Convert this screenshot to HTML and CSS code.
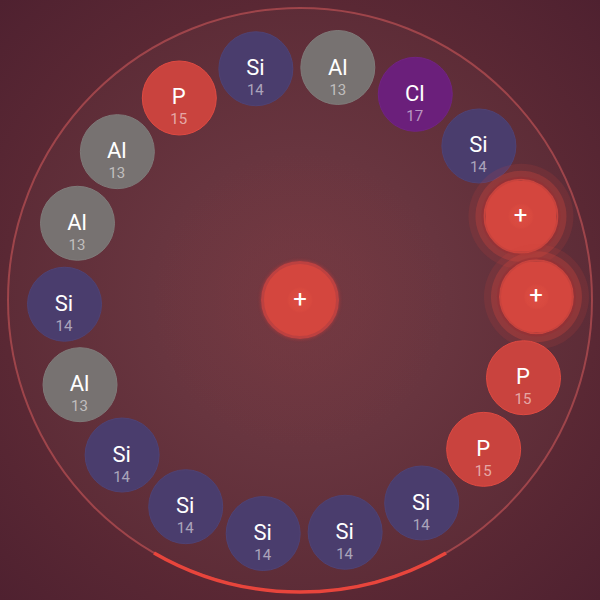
FILE: index.html
```html
<!DOCTYPE html>
<html>
<head>
<meta charset="utf-8">
<link rel="stylesheet" href="styles.css">
</head>
<body>
<div class="board">
  <div class="field">
    <svg class="ring" viewBox="0 0 588 588" width="588" height="588">
      <circle cx="294" cy="294" r="292" fill="rgba(255,255,255,0.02)" stroke="rgba(225,95,95,0.5)" stroke-width="2"/>
      <path d="M 440 546.9 A 292 292 0 0 1 148 546.9" fill="none" stroke="#e8453c" stroke-width="3.5"/>
    </svg>
    <div class="glow"></div>
    <div class="atom center-atom plus"><span class="sym">+</span></div>
    <div class="orbit">
      <div class="atom si" style="--a:349.1deg"><span class="sym">Si</span><span class="num">14</span></div>
      <div class="atom al" style="--a:9.1deg"><span class="sym">Al</span><span class="num">13</span></div>
      <div class="atom cl" style="--a:29.1deg"><span class="sym">Cl</span><span class="num">17</span></div>
      <div class="atom si" style="--a:49.1deg"><span class="sym">Si</span><span class="num">14</span></div>
      <div class="atom plus ring-plus" style="--a:69.1deg"><span class="sym">+</span></div>
      <div class="atom plus ring-plus" style="--a:89.1deg"><span class="sym">+</span></div>
      <div class="atom p" style="--a:109.1deg"><span class="sym">P</span><span class="num">15</span></div>
      <div class="atom p" style="--a:129.1deg"><span class="sym">P</span><span class="num">15</span></div>
      <div class="atom si" style="--a:149.1deg"><span class="sym">Si</span><span class="num">14</span></div>
      <div class="atom si" style="--a:169.1deg"><span class="sym">Si</span><span class="num">14</span></div>
      <div class="atom si" style="--a:189.1deg"><span class="sym">Si</span><span class="num">14</span></div>
      <div class="atom si" style="--a:209.1deg"><span class="sym">Si</span><span class="num">14</span></div>
      <div class="atom si" style="--a:229.1deg"><span class="sym">Si</span><span class="num">14</span></div>
      <div class="atom al" style="--a:249.1deg"><span class="sym">Al</span><span class="num">13</span></div>
      <div class="atom si" style="--a:269.1deg"><span class="sym">Si</span><span class="num">14</span></div>
      <div class="atom al" style="--a:289.1deg"><span class="sym">Al</span><span class="num">13</span></div>
      <div class="atom al" style="--a:309.1deg"><span class="sym">Al</span><span class="num">13</span></div>
      <div class="atom p" style="--a:329.1deg"><span class="sym">P</span><span class="num">15</span></div>
    </div>
  </div>
</div>
</body>
</html>
```

FILE: styles.css
```css
* { box-sizing: border-box; }

html, body {
  margin: 0;
  padding: 0;
  width: 600px;
  height: 600px;
  overflow: hidden;
}

body {
  font-family: Roboto, "Noto Sans", "Liberation Sans", sans-serif;
  background: radial-gradient(circle at 50% 50%, #6a343e 0%, #65313c 35%, #5a2834 70%, #4f2130 100%);
}

.board {
  width: 600px;
  height: 600px;
  display: flex;
  align-items: center;
  justify-content: center;
}

.field {
  position: relative;
  width: 588px;
  height: 588px;
  display: flex;
  align-items: center;
  justify-content: center;
}

.ring {
  position: absolute;
  inset: 0;
}

.glow {
  position: absolute;
  left: 50%;
  top: 50%;
  width: 300px;
  height: 300px;
  margin: -150px 0 0 -150px;
  border-radius: 50%;
  background: radial-gradient(circle, rgba(215, 75, 75, 0.08) 0, rgba(215, 75, 75, 0.06) 70px, rgba(215, 75, 75, 0.03) 110px, rgba(215, 75, 75, 0) 150px);
}

.orbit {
  position: absolute;
  left: 50%;
  top: 50%;
  width: 0;
  height: 0;
}

.atom {
  width: 75px;
  height: 75px;
  border-radius: 50%;
  display: flex;
  flex-direction: column;
  align-items: center;
  justify-content: center;
  gap: 3px;
  padding-top: 19px;
  color: #fff;
  border: 1.5px solid transparent;
}

.orbit .atom {
  position: absolute;
  left: -37.5px;
  top: -37.5px;
  transform: rotate(var(--a)) translateY(-236px) rotate(calc(var(--a) * -1));
}

.sym {
  font-size: 22px;
  line-height: 22px;
  font-weight: 400;
}

.num {
  font-size: 15px;
  line-height: 16px;
  color: rgba(255, 255, 255, 0.55);
}

.si {
  background: #4a3d6d;
  border-color: #4f4274;
}

.al {
  background: #777271;
  border-color: #7f7a79;
}

.cl {
  background: #6b1f7b;
  border-color: #712383;
}

.p {
  background: #c9433e;
  border-color: #e04a42;
}

.plus {
  background: radial-gradient(circle, #dc4d44 0, #d8493f 11px, #d4463e 13px, #d4463e 100%);
  padding-top: 0;
}

.plus .sym {
  font-size: 24px;
  line-height: 24px;
  font-weight: 400;
  margin-top: -2px;
}

.center-atom {
  position: relative;
  width: 78px;
  height: 78px;
  border: 3px solid #bd4140;
  box-shadow: 0 0 3px 1px rgba(200, 60, 60, 0.45);
}

.ring-plus {
  border: 2px solid #c8433d;
  box-shadow: 0 0 0 2px rgba(150, 45, 50, 0.45), 0 0 0 8px rgba(205, 70, 62, 0.33), 0 0 0 15px rgba(205, 70, 62, 0.15);
}
```
